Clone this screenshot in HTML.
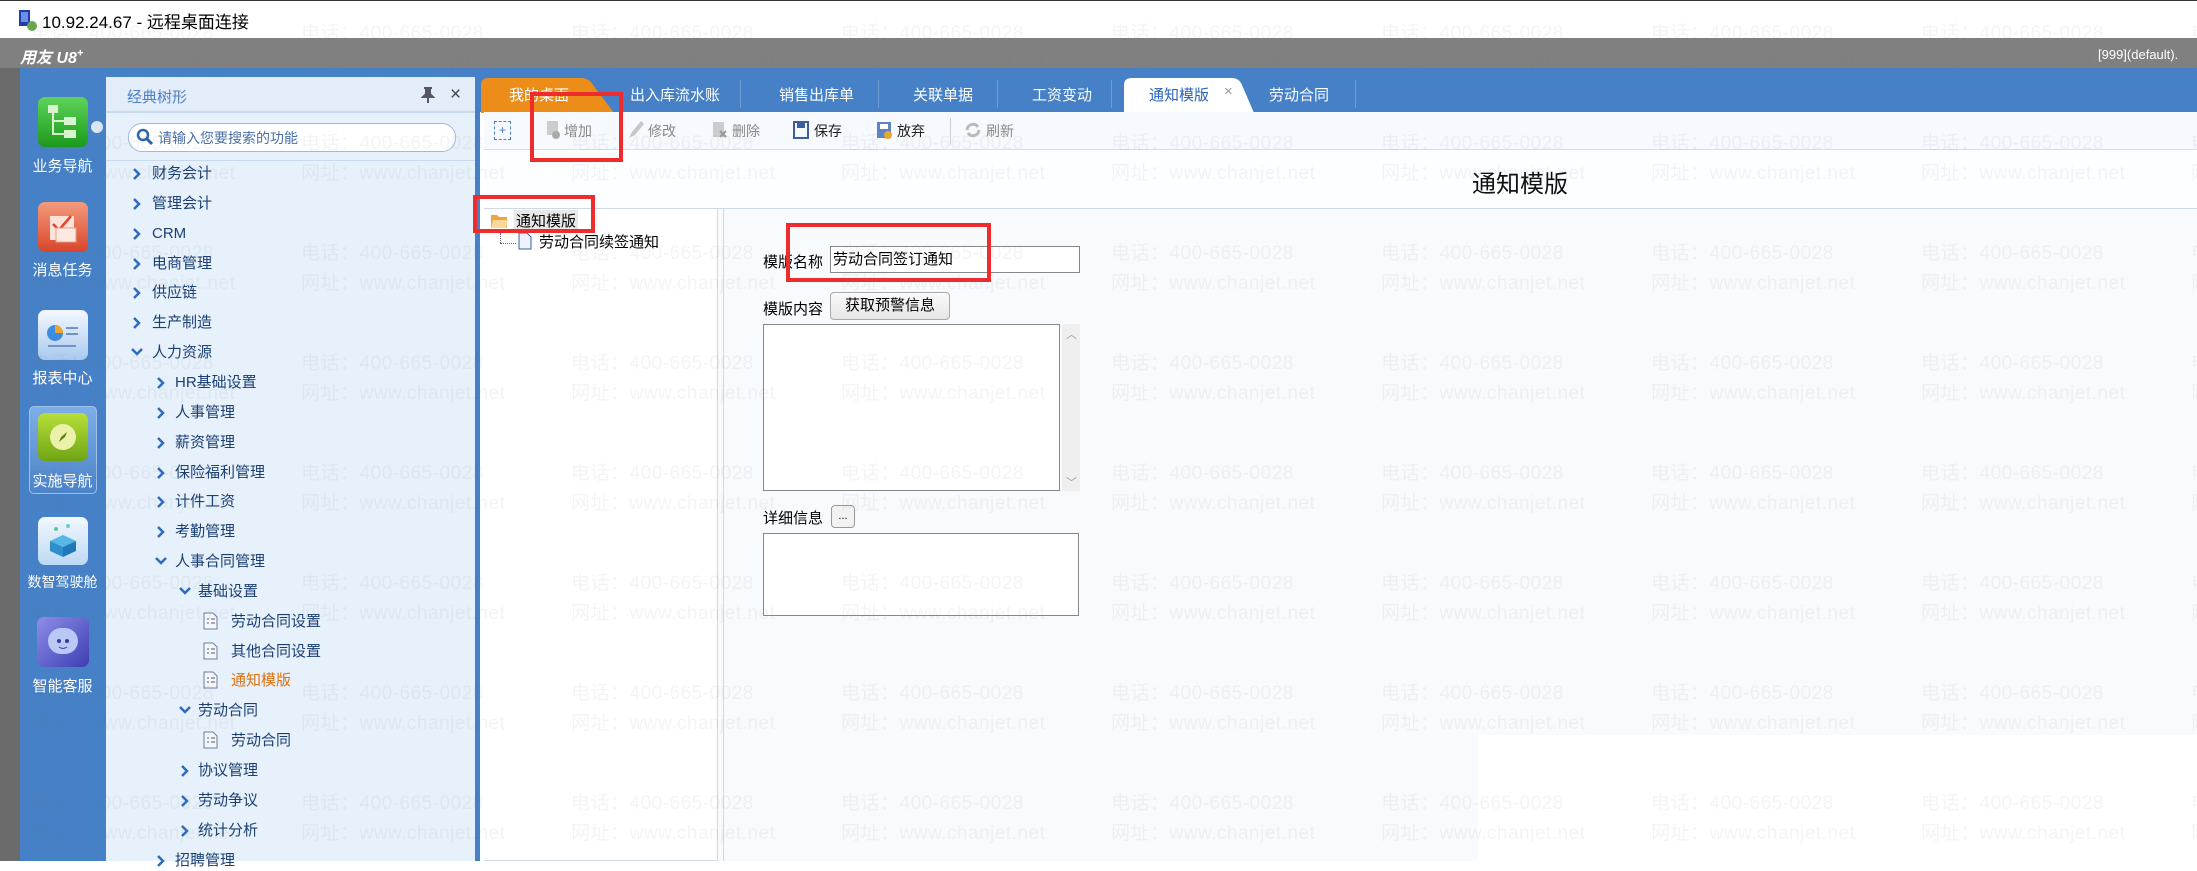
<!DOCTYPE html>
<html><head><meta charset="utf-8"><style>
*{margin:0;padding:0;box-sizing:border-box}
body{width:2197px;height:861px;overflow:hidden;position:relative;background:#fff;font-family:"Liberation Sans","Noto Sans CJK SC",sans-serif;}
.a{position:absolute;white-space:nowrap}
.tree{font-size:15px;color:#1b3f73;line-height:20px}
.nav{color:#fff;font-size:15px;width:85px;text-align:center;left:20px}
.tab{color:#fff;font-size:15px;top:84px}
.sep{top:80px;width:1px;height:28px;background:#6f9bd3}
.tb{font-size:14px;color:#888;top:121px}
.wm{position:absolute;color:rgba(110,110,110,0.08);font-size:19px;white-space:nowrap;pointer-events:none;letter-spacing:0.5px}
.red{position:absolute;border:4px solid #ee2c2c}
</style></head><body>
<div class="a" style="left:0;top:0;width:2197px;height:38px;background:#fff;border-top:1px solid #333"></div>
<svg class="a" style="left:17px;top:8px" width="22" height="24"><rect x="2" y="2" width="11" height="16" fill="#1d3fa8"/><rect x="4" y="4" width="7" height="10" fill="#6b8ee8"/><circle cx="15" cy="18" r="5" fill="#6aa84f"/></svg>
<div class="a" style="left:42px;top:8px;font-size:17px;color:#000">10.92.24.67 - 远程桌面连接</div>
<div class="a" style="left:0;top:38px;width:2197px;height:30px;background:#808080"></div>
<div class="a" style="left:20px;top:44px;font-size:16px;color:#fff;font-weight:bold;font-style:italic">用友 U8<sup style="font-size:11px">+</sup></div>
<div class="a" style="left:2098px;top:47px;font-size:13px;color:#fff">[999](default).</div>
<div class="a" style="left:0;top:68px;width:20px;height:793px;background:#6b6b6b"></div>
<div class="a" style="left:20px;top:68px;width:2177px;height:44px;background:#4680c6"></div>
<div class="a" style="left:20px;top:68px;width:86px;height:793px;background:#4680c6"></div>
<!-- nav icons -->
<div class="a" style="left:38px;top:97px;width:50px;height:50px;border-radius:7px;background:linear-gradient(#5fd35a,#1a9a1a)"></div>
<svg class="a" style="left:38px;top:97px" width="50" height="50"><rect x="10" y="8" width="10" height="8" fill="#d9f5d0"/><rect x="26" y="20" width="12" height="8" fill="#d9f5d0"/><rect x="26" y="33" width="12" height="8" fill="#d9f5d0"/><path d="M15 16V37H26M15 24H26" stroke="#d9f5d0" stroke-width="2" fill="none"/></svg>
<div class="a" style="left:91px;top:121px;width:12px;height:12px;border-radius:6px;background:#dbe6f5"></div>
<div class="a nav" style="top:155px">业务导航</div>
<div class="a" style="left:38px;top:202px;width:50px;height:50px;border-radius:7px;background:linear-gradient(#f39b7e,#d9452a)"></div>
<svg class="a" style="left:38px;top:202px" width="50" height="50"><rect x="12" y="14" width="24" height="24" fill="#fbe1d8"/><path d="M15 22l6 6 12-14" stroke="#e0432a" stroke-width="2.5" fill="none"/><rect x="18" y="26" width="20" height="14" fill="#fde9e1" stroke="#e7a08c"/></svg>
<div class="a nav" style="top:259px">消息任务</div>
<div class="a" style="left:38px;top:310px;width:50px;height:50px;border-radius:7px;background:linear-gradient(#f4f8ff,#a9c9ef)"></div>
<svg class="a" style="left:38px;top:310px" width="50" height="50"><circle cx="17" cy="23" r="8" fill="#3c8de0"/><path d="M17 23V15A8 8 0 0 1 25 23z" fill="#f2a32a"/><rect x="28" y="17" width="12" height="2" fill="#6b95c9"/><rect x="28" y="23" width="12" height="2" fill="#6b95c9"/><rect x="10" y="35" width="28" height="2" fill="#6b95c9"/></svg>
<div class="a nav" style="top:367px">报表中心</div>
<div class="a" style="left:29px;top:406px;width:68px;height:88px;border-radius:5px;background:linear-gradient(#7eaee6,#4b83c9);border:1px solid #9cc0ea"></div>
<div class="a" style="left:38px;top:413px;width:50px;height:48px;border-radius:7px;background:linear-gradient(#b7df3a,#6fa514)"></div>
<div class="a" style="left:50px;top:424px;width:26px;height:26px;border-radius:13px;background:#e9f2a8"></div>
<svg class="a" style="left:50px;top:424px" width="26" height="26"><path d="M17 8L11 13 9 18 15 13z" fill="#5f7d14"/></svg>
<div class="a nav" style="top:470px">实施导航</div>
<div class="a" style="left:38px;top:517px;width:50px;height:48px;border-radius:7px;background:linear-gradient(#f2f8ff,#bcd9f3)"></div>
<svg class="a" style="left:38px;top:517px" width="50" height="48"><path d="M12 24l13-6 13 6-13 6z" fill="#56b6e6"/><path d="M12 24v10l13 6V30z" fill="#2f8fcc"/><path d="M38 24v10l-13 6V30z" fill="#1f78b8"/><circle cx="18" cy="12" r="2" fill="#64c2a0"/><circle cx="30" cy="9" r="2" fill="#6cc"/></svg>
<div class="a nav" style="top:572px;font-size:14px">数智驾驶舱</div>
<div class="a" style="left:37px;top:617px;width:52px;height:50px;border-radius:7px;background:linear-gradient(135deg,#8e8ee8,#3d3db2)"></div>
<div class="a" style="left:48px;top:628px;width:30px;height:26px;border-radius:14px;background:#b9c8f6"></div>
<svg class="a" style="left:48px;top:628px" width="30" height="26"><circle cx="11" cy="13" r="2" fill="#3b3b9a"/><circle cx="19" cy="13" r="2" fill="#3b3b9a"/><path d="M11 19q4 3 8 0" stroke="#3b3b9a" fill="none"/></svg>
<div class="a nav" style="top:675px">智能客服</div>
<!-- tree panel -->
<div class="a" style="left:106px;top:77px;width:374px;height:784px;background:#e7f1fb;border-right:5px solid #4680c6"></div>
<div class="a" style="left:106px;top:77px;width:369px;height:36px;background:#e2edf9;border-bottom:2px solid #c9daef"></div>
<div class="a" style="left:127px;top:86px;font-size:15px;color:#4f7fc4">经典树形</div>
<svg class="a" style="left:420px;top:86px" width="16" height="18"><path d="M4 2h8M6 2v6l-3 3h10l-3-3V2M8 11v6" stroke="#556" stroke-width="2" fill="#556"/></svg>
<div class="a" style="left:450px;top:84px;font-size:19px;color:#445">×</div>
<div class="a" style="left:128px;top:123px;width:328px;height:29px;border-radius:14px;background:#fff;border:1px solid #9fb9dc"></div>
<svg class="a" style="left:136px;top:128px" width="18" height="18"><circle cx="7" cy="7" r="5" stroke="#2e63b0" stroke-width="2.5" fill="none"/><path d="M11 11l5 5" stroke="#2e63b0" stroke-width="3"/></svg>
<div class="a" style="left:158px;top:128px;font-size:14px;color:#4a70a8">请输入您要搜索的功能</div>
<div class="a" style="left:106px;top:160px;width:369px;height:1px;background:#c9daef"></div>
<div id="tree"></div>
<div class="a" style="left:484px;top:112px;width:1713px;height:749px;background:#f8fbfe"></div>
<!-- tabs -->
<svg class="a" style="left:481px;top:77px" width="135" height="36"><path d="M0 36V8Q0 1 8 1H100Q108 1 112 8L133 36z" fill="#ec8d1a"/></svg>
<div class="a tab" style="left:509px">我的桌面</div>
<div class="a tab" style="left:630px">出入库流水账</div><div class="a sep" style="left:740px"></div>
<div class="a tab" style="left:779px">销售出库单</div><div class="a sep" style="left:878px"></div>
<div class="a tab" style="left:913px">关联单据</div><div class="a sep" style="left:997px"></div>
<div class="a tab" style="left:1032px">工资变动</div><div class="a sep" style="left:1111px"></div>
<svg class="a" style="left:1124px;top:77px" width="132" height="36"><path d="M0 36V8Q0 1 8 1H108Q115 1 118 8L130 36z" fill="#fff"/></svg>
<div class="a tab" style="left:1149px;color:#2a64b8">通知模版</div>
<div class="a" style="left:1224px;top:83px;font-size:15px;color:#999">×</div>
<div class="a tab" style="left:1269px">劳动合同</div><div class="a sep" style="left:1355px"></div>
<!-- toolbar -->
<div class="a" style="left:484px;top:112px;width:1713px;height:38px;background:#f6f9fd;border-bottom:1px solid #d5dfea"></div>
<div class="a" style="left:494px;top:121px;width:17px;height:19px;border:1px dashed #4a7cc2;font-size:12px;color:#4a7cc2;text-align:center;line-height:16px">+</div>
<svg class="a" style="left:545px;top:120px" width="16" height="20"><rect x="2" y="1" width="11" height="14" fill="#ccc"/><circle cx="11" cy="15" r="4" fill="#aaa"/></svg>
<div class="a tb" style="left:564px">增加</div>
<svg class="a" style="left:627px;top:120px" width="18" height="20"><path d="M2 18l3-6 9-11 3 3-9 11z" fill="#c8c8c8"/></svg>
<div class="a tb" style="left:648px">修改</div>
<svg class="a" style="left:711px;top:120px" width="18" height="20"><rect x="2" y="2" width="11" height="15" fill="#ccc"/><path d="M9 11l6 6M15 11l-6 6" stroke="#999" stroke-width="2"/></svg>
<div class="a tb" style="left:732px">删除</div>
<svg class="a" style="left:792px;top:120px" width="18" height="20"><rect x="2" y="2" width="14" height="16" fill="none" stroke="#3a5f9e" stroke-width="2"/><rect x="5" y="2" width="8" height="6" fill="#3a5f9e"/></svg>
<div class="a tb" style="left:814px;color:#222">保存</div>
<svg class="a" style="left:875px;top:120px" width="18" height="20"><rect x="2" y="2" width="14" height="16" fill="#5d84c2"/><rect x="5" y="4" width="8" height="5" fill="#fff"/><circle cx="13" cy="15" r="4" fill="#e8a531"/></svg>
<div class="a tb" style="left:897px;color:#222">放弃</div>
<div class="a" style="left:950px;top:118px;width:1px;height:27px;background:#ccc"></div>
<svg class="a" style="left:963px;top:120px" width="20" height="20"><path d="M4 10a6 6 0 0 1 11-3M16 10a6 6 0 0 1-11 3" stroke="#bbb" stroke-width="3" fill="none"/></svg>
<div class="a tb" style="left:986px">刷新</div>
<div class="a" style="left:484px;top:150px;width:1713px;height:59px;background:#fdfeff;border-bottom:1px solid #d0dbe8"></div>
<div class="a" style="left:1472px;top:164px;font-size:24px;color:#111">通知模版</div>
<!-- tree pane -->
<div class="a" style="left:484px;top:208px;width:234px;height:653px;background:#fff;border:1px solid #cdd9e6;border-left:none"></div>
<svg class="a" style="left:490px;top:212px" width="20" height="18"><path d="M1 3h6l2 2h8v11H1z" fill="#f1a33c"/><path d="M3 8h15l-2 8H1z" fill="#fbd79a"/></svg>
<div class="a" style="left:514px;top:210px;font-size:15px;color:#000;background:#e8e8e8;padding:0 2px">通知模版</div>
<div class="a" style="left:500px;top:233px;width:1px;height:10px;border-left:1px dotted #666"></div>
<div class="a" style="left:500px;top:243px;width:16px;height:1px;border-top:1px dotted #666"></div>
<svg class="a" style="left:518px;top:232px" width="14" height="18"><path d="M1 1h8l4 4v12H1z" fill="#eef3fb" stroke="#3a5f9e"/></svg>
<div class="a" style="left:539px;top:231px;font-size:15px;color:#000">劳动合同续签通知</div>
<!-- form pane -->
<div class="a" style="left:723px;top:208px;width:1474px;height:653px;background:#f8fbfe;border-left:1px solid #cdd9e6;border-top:1px solid #cdd9e6"></div>
<div class="a" style="left:763px;top:251px;font-size:15px;color:#000">模版名称</div>
<div class="a" style="left:830px;top:246px;width:250px;height:27px;background:#fff;border:1px solid #888"></div>
<div class="a" style="left:833px;top:248px;font-size:15px;color:#000">劳动合同签订通知</div>
<div class="a" style="left:763px;top:298px;font-size:15px;color:#000">模版内容</div>
<div class="a" style="left:830px;top:292px;width:120px;height:28px;border-radius:4px;background:linear-gradient(#fafafa,#e6e6e6);border:1px solid #aaa;font-size:15px;text-align:center;line-height:26px">获取预警信息</div>
<div class="a" style="left:763px;top:324px;width:297px;height:167px;background:#fff;border:1px solid #888"></div>
<div class="a" style="left:1062px;top:324px;width:18px;height:167px;background:#efefef"></div>
<div class="a" style="left:1066px;top:326px;font-size:11px;color:#999">︿</div>
<div class="a" style="left:1066px;top:474px;font-size:11px;color:#999">﹀</div>
<div class="a" style="left:763px;top:507px;font-size:15px;color:#000">详细信息</div>
<div class="a" style="left:831px;top:505px;width:24px;height:23px;border-radius:4px;background:#f2f2f2;border:1px solid #999;font-size:11px;text-align:center;line-height:20px">...</div>
<div class="a" style="left:763px;top:533px;width:316px;height:83px;background:#fff;border:1px solid #888"></div>
<div class="a" style="left:1478px;top:735px;width:719px;height:126px;background:#fff"></div>
<div class="red" style="left:530px;top:92px;width:93px;height:70px"></div>
<div class="red" style="left:473px;top:195px;width:122px;height:38px"></div>
<div class="red" style="left:786px;top:223px;width:205px;height:59px"></div>
<div id="wm"></div>
<script>
var rows=[[1,'>','财务会计'],[1,'>','管理会计'],[1,'>','CRM'],[1,'>','电商管理'],[1,'>','供应链'],[1,'>','生产制造'],[1,'v','人力资源'],[2,'>','HR基础设置'],[2,'>','人事管理'],[2,'>','薪资管理'],[2,'>','保险福利管理'],[2,'>','计件工资'],[2,'>','考勤管理'],[2,'v','人事合同管理'],[3,'v','基础设置'],[4,'d','劳动合同设置'],[4,'d','其他合同设置'],[4,'o','通知模版'],[3,'v','劳动合同'],[4,'d','劳动合同'],[3,'>','协议管理'],[3,'>','劳动争议'],[3,'>','统计分析'],[2,'>','招聘管理']];
var ax={1:132,2:156,3:180},tx={1:152,2:175,3:198,4:231},h='';
rows.forEach(function(r,i){var y=Math.round(174+i*29.85)-10;
if(r[1]=='>')h+='<svg class="a" style="left:'+ax[r[0]]+'px;top:'+(y+3)+'px" width="10" height="14"><path d="M2 2l5 5-5 5" stroke="#2e6bc0" stroke-width="2.5" fill="none"/></svg>';
else if(r[1]=='v')h+='<svg class="a" style="left:'+(ax[r[0]]-2)+'px;top:'+(y+3)+'px" width="14" height="12"><path d="M2 3l5 5 5-5" stroke="#2e6bc0" stroke-width="2.5" fill="none"/></svg>';
else h+='<svg class="a" style="left:203px;top:'+y+'px" width="16" height="18"><path d="M1 1h9l4 4v12H1z" fill="#f4f6fa" stroke="#6a7fa0"/><path d="M4 7h2M8 7h4M4 11h2M8 11h4" stroke="#556"/></svg>';
h+='<div class="a tree" style="left:'+tx[r[0]]+'px;top:'+y+'px;'+(r[1]=='o'?'color:#e0720f':'')+'">'+r[2]+'</div>';});
document.getElementById('tree').innerHTML=h;
var w='';for(var y=18;y<861;y+=110)for(var x=31;x<2197;x+=270){w+='<div class="wm" style="left:'+x+'px;top:'+y+'px">电话：400-665-0028</div><div class="wm" style="left:'+x+'px;top:'+(y+30)+'px">网址：www.chanjet.net</div>';}
document.getElementById('wm').innerHTML=w;
</script>
</body></html>
